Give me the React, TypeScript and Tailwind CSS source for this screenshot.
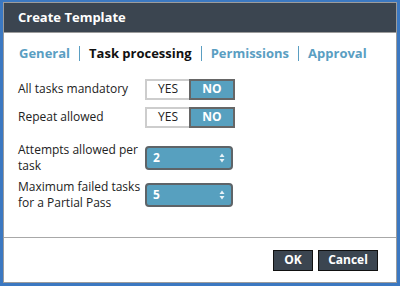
import { ReactNode } from "react";

const font = { fontFamily: '"Open Sans", "Liberation Sans", sans-serif' };

const tabs = [
  { label: "General", active: false },
  { label: "Task processing", active: true },
  { label: "Permissions", active: false },
  { label: "Approval", active: false },
];

function Toggle() {
  return (
    <div className="flex h-[21px] w-[90px] text-[12px]">
      <div className="flex flex-1 items-center justify-center border-2 border-r-0 border-[#cdcdcd] bg-white text-[#222]">
        YES
      </div>
      <div className="flex flex-1 items-center justify-center border-2 border-[#666] bg-[#57a0bf] font-bold text-white">
        NO
      </div>
    </div>
  );
}

function Select({ value }: { value: string }) {
  return (
    <div className="flex h-[24px] w-[88px] items-center justify-between rounded-[4px] border-2 border-[#5e6468] bg-[#57a0bf] pl-[6px] pr-[6px] text-[12px] font-bold text-white">
      <span>{value}</span>
      <svg width="6" height="10" viewBox="0 0 6 10">
        <path d="M3 0.5 L5.5 4 H0.5 Z" fill="#e8f2f7" />
        <path d="M3 9.5 L5.5 6 H0.5 Z" fill="#e8f2f7" />
      </svg>
    </div>
  );
}

function Row({ label, children, className }: { label: ReactNode; children: ReactNode; className?: string }) {
  return (
    <div className={"flex items-center " + (className ?? "")}>
      <div className="w-[127px] text-[12px] leading-[16px] text-[#222]">{label}</div>
      {children}
    </div>
  );
}

export default function App() {
  return (
    <div className="h-[286px] w-[400px] bg-[#3b78c1] pb-[3px] pl-[3px] pr-[3px] pt-[2px]" style={font}>
      <div className="flex h-full flex-col border border-[#9c9c9c] bg-white">
        <div className="flex h-[30px] items-center border-b border-[#9c9c9c] bg-[#3b4550] pl-[14px] text-[13px] font-bold text-white">
          Create Template
        </div>

        <div className="mt-[11px] flex items-center pl-[15px] text-[13px] font-bold">
          {tabs.map((tab, i) => (
            <div key={tab.label} className="flex items-center">
              {i > 0 && <span className="mx-[9px] inline-block h-[15px] w-px bg-[#5a9ec2]" />}
              <span className={tab.active ? "text-[#111]" : "text-[#5a9ec2]"}>{tab.label}</span>
            </div>
          ))}
        </div>

        <div className="flex flex-col pl-[14px]">
          <Row label="All tasks mandatory" className="mt-[15px]">
            <Toggle />
          </Row>
          <Row label="Repeat allowed" className="mt-[7px]">
            <Toggle />
          </Row>
          <Row label={<>Attempts allowed per<br />task</>} className="mt-[14px]">
            <Select value="2" />
          </Row>
          <Row label={<>Maximum failed tasks<br />for a Partial Pass</>} className="mt-[5px]">
            <Select value="5" />
          </Row>
        </div>

        <div className="mt-auto border-t border-[#a8a8a8]">
          <div className="flex h-[44px] items-center justify-end gap-[5px] pr-[18px]">
            <button className="h-[21px] w-[40px] border border-[#111] bg-[#3b4550] text-[12px] font-bold text-white">OK</button>
            <button className="h-[21px] w-[60px] border border-[#111] bg-[#3b4550] text-[12px] font-bold text-white">Cancel</button>
          </div>
        </div>
      </div>
    </div>
  );
}
